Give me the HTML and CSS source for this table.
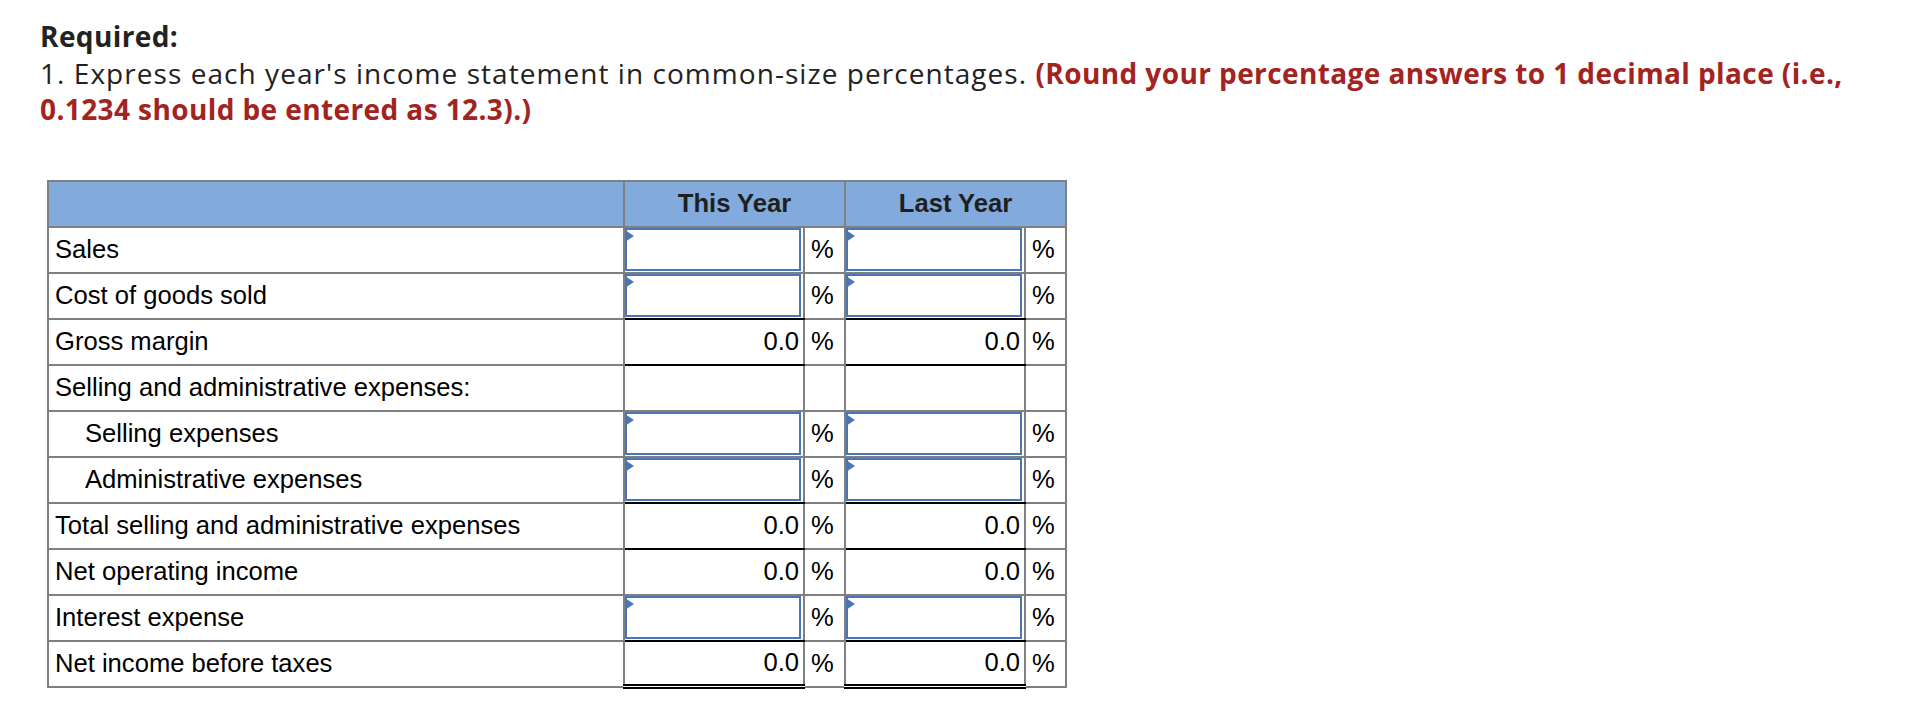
FILE: index.html
```html
<!DOCTYPE html>
<html lang="en">
<head>
<meta charset="utf-8">
<title>Common-size income statement</title>
<link rel="stylesheet" href="styles.css">
</head>
<body>
<div class="page">
  <div class="prompt">
    <div class="req">Required:</div>
    <div class="instr">1. Express each year's income statement in common-size percentages. <strong class="note">(Round your percentage answers to 1 decimal place (i.e., 0.1234 should be entered as 12.3).)</strong></div>
  </div>

  <table class="grid">
    <colgroup>
      <col class="c-label">
      <col class="c-val">
      <col class="c-pct">
      <col class="c-val">
      <col class="c-pct">
    </colgroup>
    <thead>
      <tr>
        <th></th>
        <th colspan="2">This Year</th>
        <th colspan="2">Last Year</th>
      </tr>
    </thead>
    <tbody>
      <tr>
        <td class="lbl">Sales</td>
        <td class="val"><div class="inp"></div></td><td class="pct">%</td>
        <td class="val"><div class="inp"></div></td><td class="pct">%</td>
      </tr>
      <tr>
        <td class="lbl">Cost of goods sold</td>
        <td class="val sum"><div class="inp"></div></td><td class="pct">%</td>
        <td class="val sum"><div class="inp"></div></td><td class="pct">%</td>
      </tr>
      <tr>
        <td class="lbl">Gross margin</td>
        <td class="val sum num">0.0</td><td class="pct">%</td>
        <td class="val sum num">0.0</td><td class="pct">%</td>
      </tr>
      <tr>
        <td class="lbl">Selling and administrative expenses:</td>
        <td class="val"></td><td class="pct"></td>
        <td class="val"></td><td class="pct"></td>
      </tr>
      <tr>
        <td class="lbl indent">Selling expenses</td>
        <td class="val"><div class="inp"></div></td><td class="pct">%</td>
        <td class="val"><div class="inp"></div></td><td class="pct">%</td>
      </tr>
      <tr>
        <td class="lbl indent">Administrative expenses</td>
        <td class="val sum"><div class="inp"></div></td><td class="pct">%</td>
        <td class="val sum"><div class="inp"></div></td><td class="pct">%</td>
      </tr>
      <tr>
        <td class="lbl">Total selling and administrative expenses</td>
        <td class="val sum num">0.0</td><td class="pct">%</td>
        <td class="val sum num">0.0</td><td class="pct">%</td>
      </tr>
      <tr>
        <td class="lbl">Net operating income</td>
        <td class="val num">0.0</td><td class="pct">%</td>
        <td class="val num">0.0</td><td class="pct">%</td>
      </tr>
      <tr>
        <td class="lbl">Interest expense</td>
        <td class="val sum"><div class="inp"></div></td><td class="pct">%</td>
        <td class="val sum"><div class="inp"></div></td><td class="pct">%</td>
      </tr>
      <tr>
        <td class="lbl">Net income before taxes</td>
        <td class="val dbl num">0.0</td><td class="pct">%</td>
        <td class="val dbl num">0.0</td><td class="pct">%</td>
      </tr>
    </tbody>
  </table>
</div>
</body>
</html>
```

FILE: styles.css
```css
html, body {
  margin: 0;
  padding: 0;
  background: #ffffff;
}

.page {
  padding: 18px 40px 0 40px;
}

.prompt {
  font-family: "Open Sans", Lato, sans-serif;
  font-size: 28px;
  line-height: 36.5px;
  letter-spacing: 1.05px;
  color: #222222;
  max-width: 1830px;
}

.req {
  font-weight: 700;
  letter-spacing: 0.4px;
}

.note {
  font-weight: 700;
  color: #a3231f;
  letter-spacing: 0.4px;
}

.grid {
  margin-top: 52px;
  margin-left: 7px;
  border-collapse: collapse;
  table-layout: fixed;
  width: 1018px;
  font-family: "Liberation Sans", Arial, sans-serif;
  font-size: 25.6px;
  color: #000000;
}

.c-label { width: 576px; }
.c-val { width: 180px; }
.c-pct { width: 41px; }

.grid th,
.grid td {
  border: 2px solid #808080;
  padding: 0;
  height: 46px;
  box-sizing: border-box;
}

.grid th {
  background: #82aadd;
  font-weight: 700;
  color: #1f1f1f;
  text-align: center;
}

.lbl {
  padding-left: 6px !important;
  white-space: nowrap;
}

.lbl.indent {
  padding-left: 36px !important;
}

.val {
  vertical-align: top;
}

.num {
  vertical-align: middle;
  text-align: right;
  padding-right: 4px !important;
}

.pct {
  text-align: left;
  padding-left: 6px !important;
}

.grid td.sum {
  border-bottom: 2px solid #000000;
}

.grid td.dbl {
  border-bottom: 5px double #000000;
}

.inp {
  position: relative;
  box-sizing: border-box;
  height: 43px;
  margin-right: 2px;
  border: 2px solid #4a76b6;
  background: #ffffff;
}

.inp::before {
  content: "";
  position: absolute;
  left: -2px;
  top: 0;
  border-top: 6px solid transparent;
  border-bottom: 6px solid transparent;
  border-left: 9px solid #4a76b6;
}
```
